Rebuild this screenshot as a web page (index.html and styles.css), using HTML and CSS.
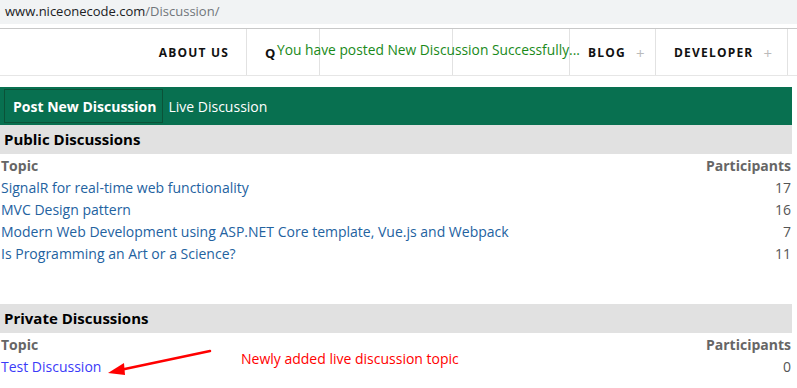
FILE: index.html
```html
<!DOCTYPE html>
<html lang="en">
<head>
	<title>Discussion</title>
	<meta charset="utf-8">
	<meta name="viewport" content="width=device-width, initial-scale=1">

	<link rel="stylesheet" href="styles.css">
</head>

<body>
	<div class="address-bar">
		<span class="host">www.niceonecode.com</span><span class="path">/Discussion/</span>
	</div>

	<nav class="top-nav">
		<div class="nav-cell about">ABOUT US</div>
		<div class="nav-cell search">Q</div>
		<div class="nav-cell blank-1"></div>
		<div class="nav-cell blank-2"></div>
		<div class="nav-cell blog">BLOG <span class="plus">+</span></div>
		<div class="nav-cell developer">DEVELOPER <span class="plus">+</span></div>
		<div class="toast">You have posted New Discussion Successfully...</div>
	</nav>

	<div class="page">
		<div class="tabs">
			<button class="tab active">Post New Discussion</button>
			<button class="tab">Live Discussion</button>
		</div>

		<h2 class="section-title">Public Discussions</h2>
		<table class="topics">
			<thead>
				<tr>
					<th>Topic</th>
					<th class="num">Participants</th>
				</tr>
			</thead>
			<tbody>
				<tr><td><a href="#">SignalR for real-time web functionality</a></td><td class="num">17</td></tr>
				<tr><td><a href="#">MVC Design pattern</a></td><td class="num">16</td></tr>
				<tr><td><a href="#">Modern Web Development using ASP.NET Core template, Vue.js and Webpack</a></td><td class="num">7</td></tr>
				<tr><td><a href="#">Is Programming an Art or a Science?</a></td><td class="num">11</td></tr>
			</tbody>
		</table>

		<h2 class="section-title private">Private Discussions</h2>
		<div class="private-wrap">
			<table class="topics">
				<thead>
					<tr>
						<th>Topic</th>
						<th class="num">Participants</th>
					</tr>
				</thead>
				<tbody>
					<tr><td><a class="new" href="#">Test Discussion</a></td><td class="num">0</td></tr>
				</tbody>
			</table>

			<!-- annotation drawn over the screenshot -->
			<svg class="arrow" width="110" height="30" viewBox="0 0 110 30">
				<line x1="104" y1="3" x2="14" y2="22" stroke="#f00" stroke-width="2.5" stroke-linecap="round"/>
				<polygon points="2,25 18,15 19,27" fill="#f00"/>
			</svg>
			<span class="note">Newly added live discussion topic</span>
		</div>
	</div>
</body>

</html>
```

FILE: styles.css
```css
body {
	margin: 0;
	padding: 0;
	font-family: "Open Sans", "Noto Sans", sans-serif;
	background: #fff;
	overflow: hidden;
}
.address-bar {
	height: 24px;
	line-height: 22px;
	padding-left: 5px;
	background: #f1f3f4;
	font-size: 13px;
	margin-bottom: 4px;
}
.address-bar .host {
	color: #202124;
}
.address-bar .path {
	color: #70757a;
}
.top-nav {
	position: relative;
	display: flex;
	justify-content: flex-end;
	height: 46px;
	border-top: 1px solid #c8c8c8;
	border-bottom: 1px solid #e6e6e6;
	padding-right: 9px;
}
.nav-cell {
	display: flex;
	align-items: center;
	padding-top: 1px;
	border-right: 1px solid #e2e2e2;
	font-size: 12px;
	font-weight: bold;
	letter-spacing: 1.2px;
	color: #111;
	box-sizing: border-box;
}
.nav-cell.about {
	padding-right: 17px;
}
.nav-cell.search {
	width: 73px;
	padding-left: 18px;
	font-size: 13px;
}
.nav-cell.blank-1 {
	width: 133px;
}
.nav-cell.blank-2 {
	width: 117px;
}
.nav-cell.blog {
	width: 86px;
	padding-left: 18px;
}
.nav-cell.developer {
	width: 132px;
	padding-left: 18px;
}
.plus {
	color: #bbb;
	font-weight: normal;
	font-size: 15px;
	margin-left: 10px;
}
.toast {
	position: absolute;
	left: 277px;
	top: 11px;
	font-size: 13.8px;
	color: #1a8a1a;
	white-space: nowrap;
}
.page {
	width: 792px;
	margin-top: 11px;
}
.tabs {
	display: flex;
	align-items: center;
	height: 38px;
	padding-left: 4px;
	background: #087050;
}
.tab {
	margin: 0;
	padding: 0 6px 0 4px;
	height: 34px;
	border: 1px solid transparent;
	background: none;
	color: #fff;
	font-family: inherit;
	font-size: 14px;
}
.tab.active {
	padding: 0 6px 0 8px;
	border-color: #0b5238;
	font-weight: bold;
}
.section-title {
	margin: 0;
	height: 29px;
	line-height: 29px;
	padding-left: 4px;
	background: #e1e1e1;
	font-size: 15px;
	color: #000;
}
.section-title.private {
	margin-top: 40px;
}
.topics {
	width: 100%;
	border-collapse: collapse;
}
.topics th,
.topics td {
	padding: 0 1px;
	height: 22px;
	text-align: left;
	font-size: 14px;
}
.topics th {
	color: #666;
	font-weight: bold;
}
.topics td {
	color: #555;
}
.topics .num {
	text-align: right;
}
.topics a {
	color: #23629f;
	text-decoration: none;
}
.topics a.new {
	color: #3b3bf8;
}
.private-wrap {
	position: relative;
}
.arrow {
	position: absolute;
	left: 106px;
	top: 15px;
}
.note {
	position: absolute;
	left: 241px;
	top: 16px;
	font-size: 14px;
	color: #f00;
}
```
